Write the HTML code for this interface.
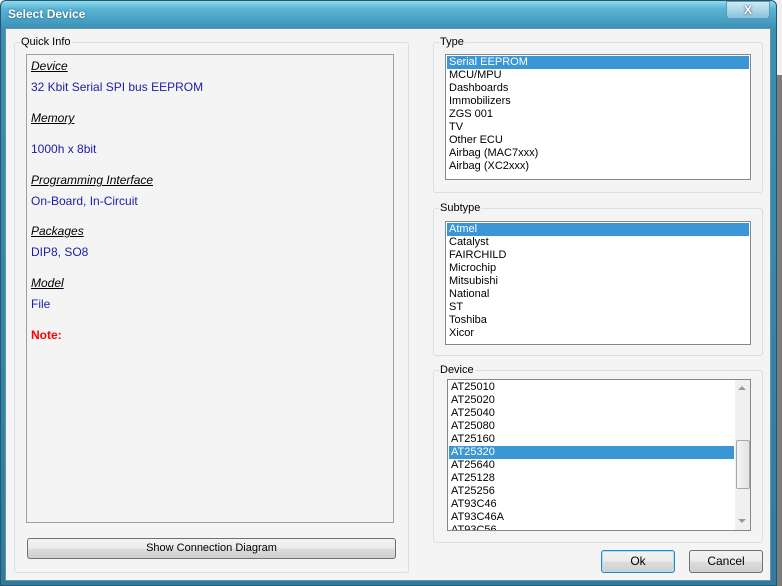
<!DOCTYPE html>
<html><head><meta charset="utf-8">
<style>
*{margin:0;padding:0;box-sizing:border-box}
body{width:782px;height:586px;overflow:hidden;background:#f0f0f0;font-family:"Liberation Sans",sans-serif;font-size:11px;color:#000;position:relative}
.a{position:absolute}
.win{left:0;top:0;width:777px;height:586px;background:linear-gradient(#8fdcf0 0px,#5ab4d4 8px,#3a8fb5 28px,#2f7c9e 100%);border-radius:6px 6px 0 0;border:1px solid #27566d}
.client{left:5px;top:28px;width:766px;height:553px;background:#f4f4f4;border:1px solid #6a93a6}
.title{left:8px;top:7px;color:#fff;font-weight:bold;font-size:12px;text-shadow:0 0 2px #1c5a78}
.close{left:726px;top:1px;width:44px;height:18px;border:1px solid #5f9ab4;border-radius:0 0 4px 4px;background:linear-gradient(#cfeaf5,#86c2dc);color:#fff;font-weight:bold;text-align:center;line-height:16px;font-size:12px;text-shadow:0 0 2px #333}
.grp{border:1px solid #d5dfe5;border-radius:3px}
.lg{background:#f4f4f4;padding:0 1px;color:#000;line-height:12px}
.box{background:#fff;border:1px solid #828790}
.lst div{height:13px;line-height:13px;padding-left:2px;white-space:nowrap}
.sel{background:#3a96d4;color:#fff}
.btn{border:1px solid #707070;border-radius:3px;background:linear-gradient(#f2f2f2 0,#ebebeb 50%,#dddddd 51%,#cfcfcf 100%);text-align:center;font-size:11px}
.qi{color:#1c1ca8;font-size:12px}
.lbl{font-style:italic;text-decoration:underline;color:#000;font-size:12px}
</style></head><body>
<div class="a" style="left:776px;top:75px;width:6px;height:511px;background:#7d7d7d"></div>
<div class="a win"></div>
<div class="a title">Select Device</div>
<div class="a close">X</div>
<div class="a client"></div>

<!-- Quick info -->
<div class="a grp" style="left:14px;top:42px;width:395px;height:531px"></div>
<div class="a lg" style="left:20px;top:36px">Quick Info</div>
<div class="a" style="left:26px;top:54px;width:368px;height:469px;border:1px solid #a0a0a0;background:#f4f4f4"></div>
<div class="a lbl" style="left:31px;top:59px">Device</div>
<div class="a qi" style="left:31px;top:80px">32 Kbit Serial SPI bus EEPROM</div>
<div class="a lbl" style="left:31px;top:111px">Memory</div>
<div class="a qi" style="left:31px;top:142px">1000h x 8bit</div>
<div class="a lbl" style="left:31px;top:173px">Programming Interface</div>
<div class="a qi" style="left:31px;top:194px">On-Board, In-Circuit</div>
<div class="a lbl" style="left:31px;top:224px">Packages</div>
<div class="a qi" style="left:31px;top:245px">DIP8, SO8</div>
<div class="a lbl" style="left:31px;top:276px">Model</div>
<div class="a qi" style="left:31px;top:297px">File</div>
<div class="a" style="left:31px;top:328px;color:#ff0000;font-weight:bold;font-size:12px">Note:</div>
<div class="a btn" style="left:27px;top:538px;width:369px;height:21px;line-height:19px">Show Connection Diagram</div>

<!-- Type -->
<div class="a grp" style="left:433px;top:42px;width:330px;height:151px"></div>
<div class="a lg" style="left:439px;top:36px">Type</div>
<div class="a box lst" style="left:445px;top:54px;width:306px;height:126px;padding:1px">
<div class="sel">Serial EEPROM</div><div>MCU/MPU</div><div>Dashboards</div><div>Immobilizers</div><div>ZGS 001</div><div>TV</div><div>Other ECU</div><div>Airbag (MAC7xxx)</div><div>Airbag (XC2xxx)</div>
</div>

<!-- Subtype -->
<div class="a grp" style="left:433px;top:208px;width:330px;height:148px"></div>
<div class="a lg" style="left:439px;top:202px">Subtype</div>
<div class="a box lst" style="left:445px;top:221px;width:306px;height:124px;padding:1px">
<div class="sel">Atmel</div><div>Catalyst</div><div>FAIRCHILD</div><div>Microchip</div><div>Mitsubishi</div><div>National</div><div>ST</div><div>Toshiba</div><div>Xicor</div>
</div>

<!-- Device -->
<div class="a grp" style="left:433px;top:370px;width:330px;height:173px"></div>
<div class="a lg" style="left:439px;top:364px">Device</div>
<div class="a box lst" style="left:447px;top:379px;width:304px;height:152px;padding:1px 16px 0 1px;overflow:hidden">
<div>AT25010</div><div>AT25020</div><div>AT25040</div><div>AT25080</div><div>AT25160</div><div class="sel">AT25320</div><div>AT25640</div><div>AT25128</div><div>AT25256</div><div>AT93C46</div><div>AT93C46A</div><div>AT93C56</div>
</div>
<div class="a" style="left:735px;top:380px;width:15px;height:150px;background:#f0f0f0"></div>
<div class="a" style="left:738px;top:386px;width:0;height:0;border-left:4px solid transparent;border-right:4px solid transparent;border-bottom:4px solid #9a9a9a"></div>
<div class="a" style="left:738px;top:519px;width:0;height:0;border-left:4px solid transparent;border-right:4px solid transparent;border-top:4px solid #9a9a9a"></div>
<div class="a" style="left:736px;top:440px;width:14px;height:49px;border:1px solid #a8a8a8;border-radius:2px;background:linear-gradient(90deg,#f4f4f4,#e2e2e2)"></div>

<div class="a btn" style="left:601px;top:550px;width:74px;height:23px;line-height:21px;font-size:12px;border-color:#3c7fb1;box-shadow:inset 0 0 0 1px #9fe3f7">Ok</div>
<div class="a btn" style="left:689px;top:550px;width:74px;height:23px;line-height:21px;font-size:12px">Cancel</div>
</body></html>
